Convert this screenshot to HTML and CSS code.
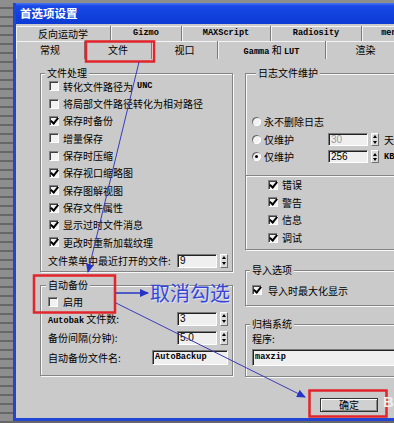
FILE: index.html
```html
<!DOCTYPE html>
<html lang="zh">
<head>
    <meta charset="UTF-8">
    <title>首选项设置</title>
    <link rel="stylesheet" href="styles.css">
</head>
<body>
    <div class="desk">
        <div class="dialog">
            <div class="titlebar">首选项设置</div>

            <div class="tabs">
                <div class="tab-row row-top">
                    <div class="tab w95">反向运动学</div>
                    <div class="tab w71 mono">Gizmo</div>
                    <div class="tab w89 mono">MAXScript</div>
                    <div class="tab w91 mono">Radiosity</div>
                    <div class="tab w91 mono">mental ray</div>
                </div>
                <div class="tab-row row-bottom">
                    <div class="tab w69">常规</div>
                    <div class="tab w67 active">文件</div>
                    <div class="tab w66">视口</div>
                    <div class="tab w108"><span class="mono">Gamma</span> 和 <span class="mono">LUT</span></div>
                    <div class="tab w80">渲染</div>
                </div>
            </div>

            <div class="panel">
                <div class="col-left">
                    <div class="group g-files">
                        <div class="group-title">文件处理</div>
                        <div class="rows">
                            <div class="row"><span class="check"></span>转化文件路径为 <span class="mono">UNC</span></div>
                            <div class="row"><span class="check"></span>将局部文件路径转化为相对路径</div>
                            <div class="row"><span class="check on"></span>保存时备份</div>
                            <div class="row"><span class="check"></span>增量保存</div>
                            <div class="row"><span class="check"></span>保存时压缩</div>
                            <div class="row"><span class="check on"></span>保存视口缩略图</div>
                            <div class="row"><span class="check on"></span>保存图解视图</div>
                            <div class="row"><span class="check on"></span>保存文件属性</div>
                            <div class="row"><span class="check on"></span>显示过时文件消息</div>
                            <div class="row"><span class="check on"></span>更改时重新加载纹理</div>
                            <div class="row recent">
                                <span class="label w129">文件菜单中最近打开的文件:</span>
                                <span class="field num w40">9</span>
                                <span class="spin"></span>
                            </div>
                        </div>
                    </div>

                    <div class="group g-auto">
                        <div class="group-title">自动备份</div>
                        <div class="rows">
                            <div class="row r16"><span class="check"></span>启用</div>
                            <div class="row r18">
                                <span class="label w129"><span class="mono">Autobak</span> 文件数:</span>
                                <span class="field num w40">3</span>
                                <span class="spin"></span>
                            </div>
                            <div class="row r20">
                                <span class="label w129">备份间隔(分钟):</span>
                                <span class="field num w40">5.0</span>
                                <span class="spin"></span>
                            </div>
                            <div class="row r20">
                                <span class="label w104">自动备份文件名:</span>
                                <span class="field mono w76 tall">AutoBackup</span>
                            </div>
                        </div>
                    </div>
                </div>

                <div class="col-right">
                    <div class="group g-log">
                        <div class="group-title">日志文件维护</div>
                        <div class="radios">
                            <div class="radio-row"><span class="radio"></span>永不删除日志</div>
                            <div class="radio-row">
                                <span class="radio"></span><span class="radio-label">仅维护</span>
                                <span class="field num small grey">30</span>
                                <span class="spin short"></span>
                                <span class="unit">天</span>
                            </div>
                            <div class="radio-row">
                                <span class="radio on"></span><span class="radio-label">仅维护</span>
                                <span class="field num small">256</span>
                                <span class="spin short"></span>
                                <span class="unit mono">KB</span>
                            </div>
                        </div>
                        <div class="log-box">
                            <div class="row log-row"><span class="check on"></span>错误</div>
                            <div class="row log-row"><span class="check on"></span>警告</div>
                            <div class="row log-row"><span class="check on"></span>信息</div>
                            <div class="row log-row"><span class="check on"></span>调试</div>
                        </div>
                    </div>

                    <div class="group g-import">
                        <div class="group-title">导入选项</div>
                        <div class="row import-row"><span class="check on"></span>导入时最大化显示</div>
                    </div>

                    <div class="group g-archive">
                        <div class="group-title">归档系统</div>
                        <div class="prog">程序:</div>
                        <div class="field mono path">maxzip</div>
                    </div>

                    <button class="ok">确定</button>
                </div>
            </div>
        </div>
    </div>

    <!-- annotations drawn over the screenshot -->
    <svg class="marks" width="394" height="423" viewBox="0 0 394 423">
        <defs>
            <marker id="ah" markerWidth="9" markerHeight="8" refX="8" refY="4" orient="auto" markerUnits="userSpaceOnUse">
                <path d="M0 0 L9 4 L0 8 Z" fill="#2633c4"/>
            </marker>
        </defs>
        <rect x="86" y="41.5" width="68" height="20" fill="none" stroke="#e2252b" stroke-width="2.5"/>
        <rect x="34" y="275.5" width="81" height="37" fill="none" stroke="#e2252b" stroke-width="2.5"/>
        <rect x="309.5" y="390.5" width="77" height="26" fill="none" stroke="#e2252b" stroke-width="2.5"/>
        <line x1="139" y1="62" x2="88" y2="272" stroke="#3b3bb8" stroke-width="1" marker-end="url(#ah)"/>
        <line x1="116" y1="293" x2="148" y2="293" stroke="#2633c4" stroke-width="1.5" marker-end="url(#ah)"/>
        <line x1="116" y1="303" x2="305" y2="397" stroke="#3b3bb8" stroke-width="1" marker-end="url(#ah)"/>
    </svg>
    <div class="note">取消勾选</div>
    <div class="watermark">B</div>
</body>
</html>
```

FILE: styles.css
```css
* {
    margin: 0;
    padding: 0;
    box-sizing: border-box;
}

body {
    width: 394px;
    height: 423px;
    overflow: hidden;
    position: relative;
    font-family: "Noto Sans CJK SC", "Noto Sans", sans-serif;
    font-size: 10px;
    color: #000;
    background: #1c2a6a;
}

.mono {
    font-family: "Liberation Mono", monospace;
    font-size: 8.6px;
    font-weight: bold;
}

.desk {
    height: 423px;
    padding: 3px 0 0 13px;
    background: repeating-linear-gradient(to bottom, #8e8e8e 0 7px, #676767 7px 9px);
}

.dialog {
    width: 420px;
    height: 418px;
    background: #cacaca;
    border-left: 3px solid #2346d2;
    border-bottom: 3px solid #2346d2;
}

.titlebar {
    height: 21px;
    line-height: 21px;
    padding-left: 4px;
    color: #fff;
    font-size: 11.5px;
    font-weight: bold;
    background: linear-gradient(to bottom, #4a76f2 0, #1848e6 3px, #0b3ad4 100%);
}

/* tabs */
.tabs {
    margin-top: 2px;
}

.tab-row {
    display: flex;
}

.row-top {
    height: 15px;
}

.row-bottom {
    height: 18px;
}

.tab {
    flex: none;
    text-align: center;
    border-right: 1px solid #7a7a7a;
    box-shadow: inset 1px 1px 0 #f4f4f4;
    white-space: nowrap;
    overflow: hidden;
}

.row-top .tab {
    line-height: 15px;
}

.row-bottom .tab {
    line-height: 18px;
}

.w95 { width: 95px; }
.w71 { width: 71px; }
.w89 { width: 89px; }
.w91 { width: 91px; }
.w69 { width: 69px; }
.w67 { width: 67px; }
.w66 { width: 66px; }
.w108 { width: 108px; }
.w80 { width: 80px; }

/* panel */
.panel {
    display: grid;
    grid-template-columns: 193px 168px;
    column-gap: 12px;
    padding-left: 24px;
}

.group {
    border: 1px solid #858585;
    box-shadow: 1px 1px 0 #f8f8f8, inset 1px 1px 0 #f8f8f8;
}

.group-title {
    width: max-content;
    height: 12px;
    line-height: 12px;
    margin-top: -7px;
    margin-left: 4px;
    padding: 0 2px;
    background: #cacaca;
}

.row {
    display: flex;
    align-items: center;
    gap: 4px;
    white-space: nowrap;
}

.label {
    flex: none;
}

.w129 { width: 129px; }
.w104 { width: 104px; }
.w40 { width: 40px; }
.w76 { width: 76px; }

.check {
    flex: none;
    width: 10px;
    height: 10px;
    display: flex;
    align-items: center;
    justify-content: center;
    background: #f2f2f2;
    border-top: 1px solid #808080;
    border-left: 1px solid #808080;
    border-right: 1px solid #fff;
    border-bottom: 1px solid #fff;
    box-shadow: inset 1px 1px 0 #404040;
}

.check.on::after {
    content: "";
    width: 3px;
    height: 6px;
    margin: -2px 0 0 1px;
    border: solid #000;
    border-width: 0 2px 2px 0;
    transform: rotate(40deg);
}

.radio {
    flex: none;
    width: 9px;
    height: 9px;
    margin-right: 3px;
    border-radius: 50%;
    display: flex;
    align-items: center;
    justify-content: center;
    background: #f2f2f2;
    box-shadow: inset 1px 1px 0 #6a6a6a, inset -1px -1px 0 #fff;
}

.radio.on::after {
    content: "";
    width: 3px;
    height: 3px;
    border-radius: 50%;
    background: #000;
}

.field {
    flex: none;
    height: 14px;
    line-height: 12px;
    padding-left: 2px;
    background: #efefef;
    border-top: 1px solid #7a7a7a;
    border-left: 1px solid #7a7a7a;
    border-right: 1px solid #fff;
    border-bottom: 1px solid #fff;
    box-shadow: inset 1px 1px 0 #222;
    white-space: nowrap;
    overflow: hidden;
}

.field.num {
    font-family: "Liberation Sans", sans-serif;
    font-size: 10px;
}

.field.tall {
    height: 15px;
    line-height: 13px;
}

.spin {
    flex: none;
    width: 8px;
    height: 14px;
    margin-left: -1px;
    display: flex;
    flex-direction: column;
    align-items: center;
    justify-content: space-around;
    background: #dcdcdc;
    border: 1px solid;
    border-color: #fff #707070 #707070 #fff;
}

.spin::before {
    content: "";
    border-left: 2px solid transparent;
    border-right: 2px solid transparent;
    border-bottom: 3px solid #000;
}

.spin::after {
    content: "";
    border-left: 2px solid transparent;
    border-right: 2px solid transparent;
    border-top: 3px solid #000;
}

/* left column */
.g-files {
    margin-top: 14px;
}

.g-files .rows {
    margin-top: -1.5px;
    padding-left: 8px;
    padding-bottom: 1px;
}

.g-files .row {
    height: 17.35px;
}

.g-files .row.recent {
    height: 18px;
    margin-top: 1px;
    margin-left: -1px;
    gap: 0;
}

.recent .spin,
.g-auto .spin {
    margin-left: 3px;
}

.g-auto {
    margin-top: 13px;
}

.g-auto .group-title {
    margin-left: 5px;
}

.g-auto .rows {
    margin-top: 3px;
    padding-left: 7px;
    padding-bottom: 7px;
}

.g-auto .row {
    gap: 0;
}

.g-auto .row .check {
    margin-right: 5px;
}

.r16 { height: 16px; }
.r18 { height: 18px; }
.r20 { height: 20px; }

/* right column */
.g-log {
    margin-top: 14px;
}

.g-log .group-title {
    margin-left: 10px;
}

.radios {
    margin-top: 34px;
    padding-left: 6px;
}

.radio-row {
    height: 17.5px;
    display: flex;
    align-items: center;
    white-space: nowrap;
}

.radio-label {
    width: 64px;
    flex: none;
}

.field.small {
    width: 40px;
    height: 13px;
    line-height: 11px;
}

.field.grey {
    color: #9a9a9a;
}

.spin.short {
    height: 13px;
    margin-left: 3px;
}

.unit {
    margin-left: 5px;
}

.log-box {
    margin-top: 9.5px;
    border-top: 1px solid #858585;
    box-shadow: inset 0 1px 0 #f8f8f8;
    padding: 0 0 3px 22px;
}

.log-row {
    height: 17.6px;
}

.g-import {
    margin-top: 20px;
}

.import-row {
    height: 16px;
    margin-top: 6px;
    margin-bottom: 7px;
    padding-left: 6px;
    gap: 6px;
}

.g-archive {
    margin-top: 18px;
}

.prog {
    margin: 2px 0 0 6px;
    line-height: 14px;
}

.field.path {
    margin: 3px 0 10px 6px;
    height: 17px;
    line-height: 15px;
}

.ok {
    display: block;
    margin: 21px 0 0 75px;
    width: 58px;
    height: 14px;
    font-family: "Noto Sans CJK SC", sans-serif;
    font-size: 10px;
    line-height: 12px;
    background: #d0d0d0;
    border: 1px solid #333;
    box-shadow: inset 1px 1px 0 #fff, inset -1px -1px 0 #888;
}

/* annotations */
.marks {
    position: absolute;
    left: 0;
    top: 0;
    pointer-events: none;
}

.note {
    position: absolute;
    left: 150px;
    top: 280px;
    font-family: "Noto Sans CJK SC", sans-serif;
    font-size: 20px;
    line-height: 26px;
    color: #3646d4;
    text-shadow: 1px 1px 0 #e4e4ff;
}

.watermark {
    position: absolute;
    left: 383px;
    top: 393px;
    font-family: "Liberation Sans", sans-serif;
    font-weight: bold;
    font-size: 15px;
    color: #eeeeee;
}
```
